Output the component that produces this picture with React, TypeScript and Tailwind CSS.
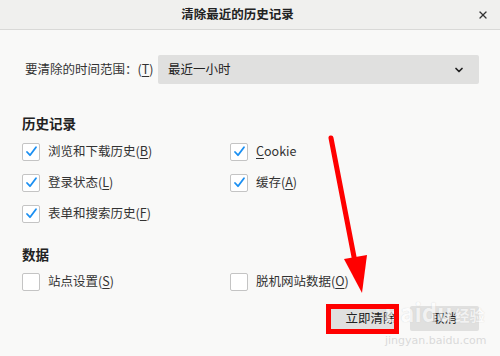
import { ChevronDown, X } from "lucide-react";

type Item = { label: string; key: string; checked: boolean };

const historyItems: Item[] = [
  { label: "浏览和下载历史", key: "B", checked: true },
  { label: "Cookie", key: "C", checked: true },
  { label: "登录状态", key: "L", checked: true },
  { label: "缓存", key: "A", checked: true },
  { label: "表单和搜索历史", key: "F", checked: true },
];

const dataItems: Item[] = [
  { label: "站点设置", key: "S", checked: false },
  { label: "脱机网站数据", key: "O", checked: false },
];

function Checkbox({ checked }: { checked: boolean }) {
  return (
    <span className="w-[18px] h-[18px] shrink-0 rounded-[2px] border border-[#c4c4c4] bg-white flex items-center justify-center">
      {checked && (
        <svg width="13" height="13" viewBox="0 0 13 13">
          <path d="M2 7 L5 10.2 L11 2.2" fill="none" stroke="#1a8ff2" strokeWidth="1.8" strokeLinecap="round" strokeLinejoin="round" />
        </svg>
      )}
    </span>
  );
}

function Row({ item }: { item: Item }) {
  // "Cookie" carries its access key on the first letter
  const label =
    item.label === "Cookie" ? (
      <>
        <span className="underline underline-offset-2">C</span>ookie
      </>
    ) : (
      <>
        {item.label}(<span className="underline underline-offset-2">{item.key}</span>)
      </>
    );
  return (
    <div className="h-[31px] flex items-center gap-[8px]">
      <Checkbox checked={item.checked} />
      <span className="text-[12.5px] text-[#333]">{label}</span>
    </div>
  );
}

export default function App() {
  return (
    <div className="w-[500px] h-[356px] relative overflow-hidden bg-[#f9f9f8] font-['Noto_Sans_CJK_SC','Noto_Sans',sans-serif]">
      <header className="h-[30px] bg-[#f0f0ee] border-b border-[#d9d9d7] flex items-center justify-center relative">
        <span className="text-[12.5px] font-bold text-[#222] -ml-[25px]">清除最近的历史记录</span>
        <X className="absolute right-[11px] top-[9px] w-[12px] h-[12px] text-[#333]" strokeWidth={2.5} />
      </header>

      <main className="pl-[22px] pr-[21px]">
        <div className="mt-[25px] h-[29px] flex items-center">
          <span className="w-[136px] pl-[3px] text-[12.5px] text-[#333]">
            要清除的时间范围：(<span className="underline underline-offset-2">T</span>)
          </span>
          <div className="flex-1 h-full rounded-[2px] bg-[#e0e0df] flex items-center justify-between pl-[10px] pr-[14px]">
            <span className="text-[12.5px] text-[#222]">最近一小时</span>
            <ChevronDown className="w-[12px] h-[12px] text-[#222]" strokeWidth={3.5} />
          </div>
        </div>

        <h2 className="mt-[29px] h-[20px] leading-[20px] text-[13.5px] font-bold text-[#222]">历史记录</h2>
        <div className="pt-[3px] grid grid-cols-[208px_1fr]">
          {historyItems.map((it) => (
            <Row key={it.key} item={it} />
          ))}
        </div>

        <h2 className="mt-[15px] h-[20px] leading-[20px] text-[13.5px] font-bold text-[#222]">数据</h2>
        <div className="pt-[2px] grid grid-cols-[208px_1fr]">
          {dataItems.map((it) => (
            <Row key={it.key} item={it} />
          ))}
        </div>

        <div className="mt-[9px] flex justify-end gap-[11px]">
          <button className="w-[68px] h-[25px] pl-[11px] rounded-[2px] bg-[#e0e0df] text-[12.5px] text-[#222]">立即清除</button>
          <button className="w-[69px] h-[25px] rounded-[2px] bg-[#e0e0df] text-[12.5px] text-[#222]">取消</button>
        </div>
      </main>

      {/* watermark */}
      <div className="absolute left-[384px] top-[298px] flex items-end gap-[2px] opacity-60 pointer-events-none">
        <span className="text-[24px] leading-[28px] font-bold text-white [text-shadow:0_0_1px_#bbb]">Baidu</span>
        <span className="text-[15px] leading-[22px] font-bold text-white [text-shadow:0_0_1px_#bbb]">经验</span>
      </div>
      <span className="absolute left-[385px] top-[333px] text-[11px] text-[#dadada] font-['DejaVu_Sans',sans-serif] pointer-events-none">
        jingyan.baidu.com
      </span>

      {/* red annotation */}
      <div className="absolute left-[326px] top-[304px] w-[73px] h-[30px] border-[5px] border-[#ff0000] pointer-events-none" />
      <svg className="absolute inset-0 pointer-events-none" width="500" height="356">
        <line x1="331" y1="138" x2="355" y2="262" stroke="#ff0000" strokeWidth="5" strokeLinecap="round" />
        <polygon points="344,259 367,255 362,293" fill="#ff0000" />
      </svg>
    </div>
  );
}
